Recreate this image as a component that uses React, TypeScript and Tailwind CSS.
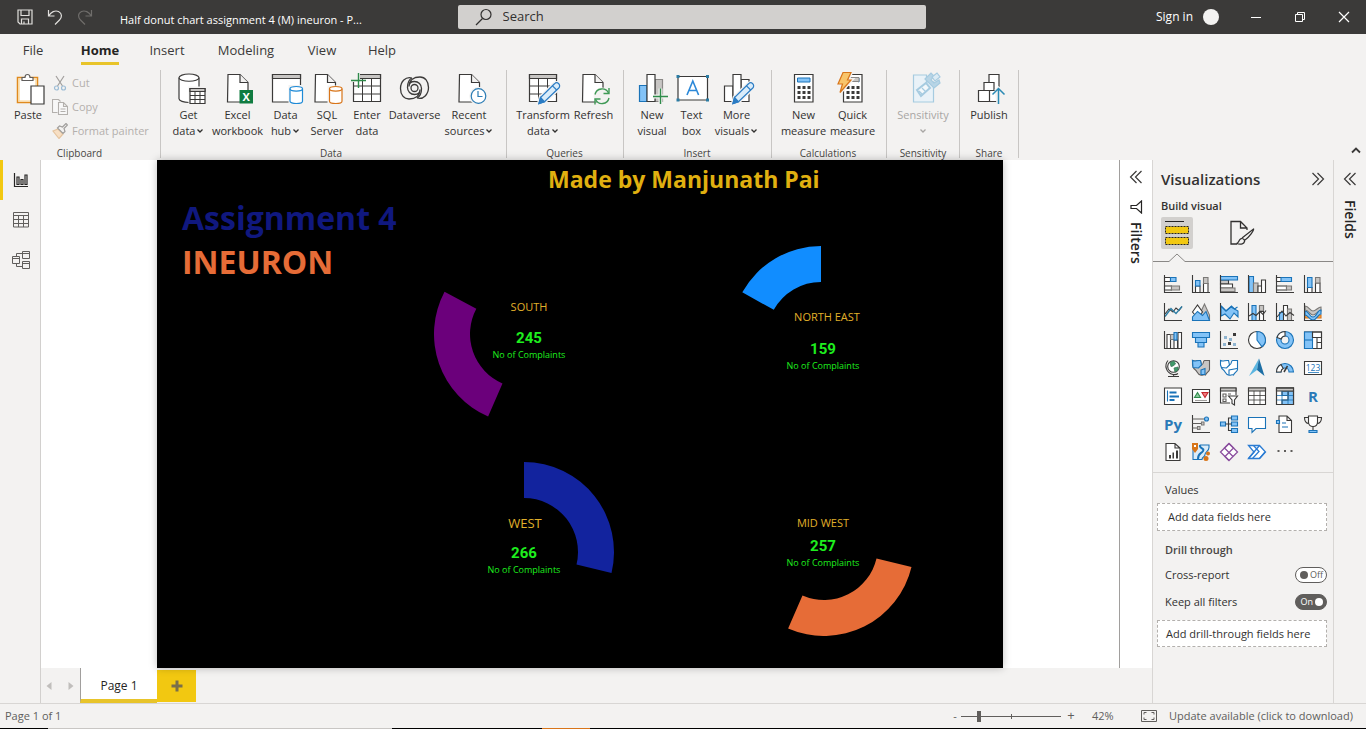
import React from "react";

type Kids = { children?: React.ReactNode };

const K = "#3b3a39";
const BL = "#1a73b8";
const BF = "#83c3f7";
const GR = "#c8c6c4";

function Big({ children }: Kids) {
  return (
    <svg viewBox="0 0 32 32" className="h-8 w-8 shrink-0 overflow-visible" fill="none" stroke={K} strokeWidth="1.2" aria-hidden="true">
      {children}
    </svg>
  );
}

function Doc({ x }: { x: number }) {
  return (
    <g transform={`translate(${x} 1)`}>
      <path d="M.5.5h12l8 8v19.500h-20.500z" fill="#fff" />
      <path d="M12.500.5v8h8" fill="#f3f2f1" />
    </g>
  );
}

function Cylinder({ x, y, w, h, color, fill = "#fff" }: { x: number; y: number; w: number; h: number; color: string; fill?: string }) {
  const r = w / 2;
  const ry = w / 5.5;
  return (
    <g stroke={color} fill={fill}>
      <path d={`M${x} ${y + ry}v${h - 2 * ry}a${r} ${ry} 0 0 0 ${w} 0v${-(h - 2 * ry)}`} />
      <ellipse cx={x + r} cy={y + ry} rx={r} ry={ry} />
    </g>
  );
}

function Grid() {
  return (
    <g>
      <path d="M2.500 1.500h27v27h-27z" fill="#fff" />
      <path d="M2.500 1.500h27v4h-27z" fill={GR} />
      <path d="M2.500 13h27M2.500 21h27M11.500 5.500v23M20.500 5.500v23" strokeWidth="1" />
    </g>
  );
}

function Pencil() {
  return (
    <g stroke="#2b7cc4">
      <path d="M12 30.500l1.500-6L27.500 10.800a3 3 0 0 1 4.300 4.200L17.500 28.800z" fill="#fff" stroke="#f3f2f1" strokeWidth="4" />
      <path d="M12 30.500l1.500-6L27.500 10.800a3 3 0 0 1 4.300 4.200L17.500 28.800z" fill="#d9ecfa" />
      <path d="M12 30.500l1.500-6 4 4.300z" fill="#2b7cc4" />
      <path d="M25.500 12.800l4.200 4.200" />
    </g>
  );
}

function Calc({ x }: { x: number }) {
  return (
    <g transform={`translate(${x} 1.500)`}>
      <path d="M0 0h18.500v27.500h-18.500z" fill="#fff" />
      <path d="M3 3.500h12.500v4h-12.500z" fill={BF} stroke={BL} strokeWidth="1" />
      {[11.5, 16.5, 21.5].map((y) => (
        <path key={y} d={`M3 ${y}h3v3h-3zM8 ${y}h3v3h-3zM13 ${y}h3v3h-3z`} fill={K} stroke="none" />
      ))}
    </g>
  );
}

const PasteIcon = () => (
  <Big>
    <path d="M5.500 4.500h20v25h-20z" fill="#fff" stroke="#e08a1e" strokeWidth="1.500" />
    <path d="M7 6h17v22H7z" stroke="#f9d28f" />
    <path d="M10 7.500V4.500h3c0-2 1-3 2.500-3s2.500 1 2.500 3h3v3z" fill="#fff" stroke="#605e5c" />
    <path d="M19 13h13v18H19z" fill="#fff" />
  </Big>
);
const GetDataIcon = () => (
  <Big>
    <Cylinder x={6} y={1} w={20} h={28.5} color={K} />
    <path d="M15.500 13.500H33V31H15.500z" fill="#f3f2f1" stroke="none" />
    <path d="M17 15.500h15v15H17z" fill="#fff" />
    <path d="M17 15.500h15v3H17z" fill={GR} />
    <path d="M17 22.500h15M17 26.500h15M22 18.500v12M27 18.500v12" strokeWidth="1" />
  </Big>
);
const ExcelIcon = () => (
  <Big>
    <Doc x={5.5} />
    <path d="M17.500 17H31v13.500H17.500z" fill="#107c41" stroke="none" />
    <text x="24.200" y="28" textAnchor="middle" fontSize="11" fontWeight="700" fill="#fff" stroke="none" fontFamily="Open Sans, sans-serif">X</text>
  </Big>
);
const DataHubIcon = () => (
  <Big>
    <path d="M2.500 1.500h28v27.500h-28z" fill="#fff" />
    <path d="M2.500 1.500h28v4h-28z" fill={GR} />
    <path d="M18.500 12H34v19H18.500z" fill="#f3f2f1" stroke="none" />
    <Cylinder x={20} y={13.5} w={12.5} h={17} color="#1e8ad6" />
  </Big>
);
const SqlIcon = () => (
  <Big>
    <Doc x={4} />
    <path d="M16.500 12.500H32V31H16.500z" fill="#f3f2f1" stroke="none" />
    <Cylinder x={18.5} y={13.5} w={12.5} h={17} color="#d8751a" />
  </Big>
);
const EnterIcon = () => (
  <Big>
    <Grid />
    <path d="M0 0h9v9H0z" fill="#f3f2f1" stroke="none" />
    <path d="M7.500 0v15M0 7.500h15" stroke="#2e8b4a" strokeWidth="1.400" />
  </Big>
);
const swirl = "M13 5C6.500 3 1.500 9 1.500 15.500 1.500 22 5 26 10 26c6 0 11-3 11-9.500M13 5C9 7 8.500 11 8.500 14.500c0 4 3 7 7 7s5.500-2 5.500-5";
const DataverseIcon = () => (
  <Big>
    <g strokeWidth="1.300">
      <path d={swirl} />
      <path d={swirl} transform="rotate(180 15.500 15)" />
      <circle cx="15.500" cy="15" r="3.500" />
    </g>
  </Big>
);
const RecentIcon = () => (
  <Big>
    <Doc x={6} />
    <circle cx="25.500" cy="23" r="7.500" fill="#fff" stroke="#f3f2f1" strokeWidth="3.500" />
    <circle cx="25.500" cy="23" r="7.300" fill="#fff" stroke="#2b7cb4" />
    <path d="M25 18v5.500h4.500" stroke="#2b7cb4" />
  </Big>
);
const TransformIcon = () => (
  <Big>
    <Grid />
    <Pencil />
  </Big>
);
const RefreshIcon = () => (
  <Big>
    <Doc x={4.5} />
    <circle cx="24" cy="23" r="8.500" fill="#f3f2f1" stroke="none" />
    <g stroke="#3f9a56" strokeWidth="1.400">
      <path d="M17 21.500a7.200 7.200 0 0 1 13.500-1.500M31 25a7.200 7.200 0 0 1-13.500 1.500" />
      <path d="M31 15v5.500h-5.500M17 31.500V26h5.500" />
    </g>
  </Big>
);
const NewVisualIcon = () => (
  <Big>
    <path d="M3.500 12.500H11v16H3.500z" fill={BF} stroke={BL} />
    <path d="M19 6.500h7.500v22H19z" fill={GR} stroke="#8a8886" />
    <path d="M11 1.500h8v27h-8z" fill="#fff" />
    <path d="M24.500 15.500v15.500M17 23.500h15" stroke="#f3f2f1" strokeWidth="4" />
    <path d="M24.500 15.500v15.500M17 23.500h15" stroke="#2e8b4a" strokeWidth="1.400" />
  </Big>
);
const TextBoxIcon = () => (
  <Big>
    <path d="M2 3.500h29.500V27H2z" fill="#fff" />
    <path d="M.5 2h3v3h-3zM30 2h3v3h-3zM.5 25.500h3v3h-3zM30 25.500h3v3h-3z" fill="#2b7ca4" stroke="none" />
    <path d="M11 22l5.800-14 5.800 14M13 17.500h7.600" stroke="#2b88d8" strokeWidth="1.600" />
  </Big>
);
const MoreIcon = () => (
  <Big>
    <path d="M3.500 13H12v15.500H3.500zM20 6.500h8v22h-8z" fill="#fff" />
    <path d="M12 1.500h8v27h-8z" fill="#fff" />
    <Pencil />
  </Big>
);
const CalcIcon = () => (
  <Big>
    <Calc x={6.500} />
  </Big>
);
const QuickIcon = () => (
  <Big>
    <Calc x={6.500} />
    <path d="M8.500 3.500h13v7h-13z" fill="#fff" stroke="none" />
    <path d="M13 4.500h9v4h-9z" fill={GR} stroke="#8a8886" strokeWidth="1" />
    <path d="M6 -.5h8L10.500 7H14L3 19.500l2.500-8.500H1z" fill="#f8c56b" stroke="#f3f2f1" strokeWidth="4" />
    <path d="M6 -.5h8L10.500 7H14L3 19.500l2.500-8.500H1z" fill="#f8c56b" stroke="#d8751a" />
  </Big>
);
const SensitivityIcon = () => (
  <Big>
    <g stroke="#a6cbe0">
      <path d="M6.500 2h13v7h7v20h-20z" fill="#e9f2f8" />
      <path d="M10 17l9-7 4 5-9 8z" fill="#f3f8fb" strokeWidth="2" />
      <path d="M12 18l4 4M15 15l4 4" />
      <path d="M18 6l6-6 3 3-3 4 3 3 5-3 1 3-6 5z" fill="#b8d5e6" />
      <path d="M25 4l5-4 3 4-5 4z" fill="#dcebf4" />
    </g>
  </Big>
);
const PublishIcon = () => (
  <Big>
    <path d="M16 1.500h10v27H16z" fill="#fff" />
    <path d="M11 9.500h10v8H11z" fill="#fff" />
    <path d="M16.500 17.500h10v11h-10zM5.500 17.500h11v11h-11z" fill="#fff" />
    <path d="M21.500 16.500L25.500 13l7 6v12h-9z" fill="#f3f2f1" stroke="none" />
    <path d="M25.500 31V15.500M19.500 21.500l6-6 6 6" stroke="#2b8ab4" strokeWidth="1.500" />
  </Big>
);

type Tool = { label: string[]; icon: () => React.JSX.Element; w: string; drop?: boolean; off?: boolean };
type Group = { name: string; pad: string; tools: Tool[] };

const groups: Group[] = [
  {
    name: "Data",
    pad: "pl-1 pr-[9px]",
    tools: [
      { label: ["Get", "data"], icon: GetDataIcon, w: "w-[47px]", drop: true },
      { label: ["Excel", "workbook"], icon: ExcelIcon, w: "w-[51px]" },
      { label: ["Data", "hub"], icon: DataHubIcon, w: "w-[45px]", drop: true },
      { label: ["SQL", "Server"], icon: SqlIcon, w: "w-[38px]" },
      { label: ["Enter", "data"], icon: EnterIcon, w: "w-[42px]" },
      { label: ["Dataverse"], icon: DataverseIcon, w: "w-[53px]" },
      { label: ["Recent", "sources"], icon: RecentIcon, w: "w-[56px]", drop: true },
    ],
  },
  {
    name: "Queries",
    pad: "pl-[7px] pr-2",
    tools: [
      { label: ["Transform", "data"], icon: TransformIcon, w: "w-[58px]", drop: true },
      { label: ["Refresh"], icon: RefreshIcon, w: "w-[43px]" },
    ],
  },
  {
    name: "Insert",
    pad: "pl-2 pr-[9px]",
    tools: [
      { label: ["New", "visual"], icon: NewVisualIcon, w: "w-[40px]" },
      { label: ["Text", "box"], icon: TextBoxIcon, w: "w-[39px]" },
      { label: ["More", "visuals"], icon: MoreIcon, w: "w-[51px]", drop: true },
    ],
  },
  {
    name: "Calculations",
    pad: "pl-[7px] pr-[9px]",
    tools: [
      { label: ["New", "measure"], icon: CalcIcon, w: "w-[49px]" },
      { label: ["Quick", "measure"], icon: QuickIcon, w: "w-[49px]" },
    ],
  },
  {
    name: "Sensitivity",
    pad: "px-1",
    tools: [{ label: ["Sensitivity", ""], icon: SensitivityIcon, w: "w-[64px]", drop: true, off: true }],
  },
  { name: "Share", pad: "px-1", tools: [{ label: ["Publish"], icon: PublishIcon, w: "w-[50px]" }] },
];

function Chevron() {
  return (
    <svg viewBox="0 0 8 6" className="h-[6px] w-2 shrink-0" fill="none" stroke="currentColor" strokeWidth="1.300" aria-hidden="true">
      <path d="M1.500 1.500L4 4l2.500-2.500" />
    </svg>
  );
}

function ToolButton({ tool }: { tool: Tool }) {
  const Icon = tool.icon;
  return (
    <button className={`${tool.w} flex flex-col items-center ${tool.off ? "text-[#a8a6a4]" : "text-[#323130]"}`}>
      <span className="mb-[2px]">
        <Icon />
      </span>
      {tool.label.map((line, i) => (
        <span key={i} className="flex h-4 items-center gap-px whitespace-nowrap text-[11px] leading-4">
          {line}
          {tool.drop && i === tool.label.length - 1 && <Chevron />}
        </span>
      ))}
    </button>
  );
}

function GroupBox({ name, pad, children }: { name: string; pad: string } & Kids) {
  return (
    <section aria-label={name} className={`flex flex-col justify-between border-r border-[#c8c6c4] ${pad}`}>
      <div className="flex items-start pt-[3px]">{children}</div>
      <div className="text-center text-[10px] leading-[10px] text-[#484644]">{name}</div>
    </section>
  );
}

function Ribbon() {
  return (
    <div className="flex h-[92px] items-stretch pt-[2px] pb-[2px]">
      <GroupBox name="Clipboard" pad="pl-2 pr-[9px]">
        <button className="flex w-10 flex-col items-center text-[#323130]">
          <span className="mb-[2px]">
            <PasteIcon />
          </span>
          <span className="text-[11px] leading-4">Paste</span>
        </button>
        <div className="-mt-[2px] flex w-[103px] flex-col pl-1 text-[11px] leading-6 text-[#b3b0ad]">
          <button className="flex h-6 items-center gap-1" disabled>
            <svg viewBox="0 0 16 16" className="h-4 w-4 shrink-0" fill="none" strokeWidth="1.200" aria-hidden="true">
              <path d="M4 1l6.500 10M12 1L5.500 11" stroke="#a19f9d" />
              <circle cx="4.500" cy="13" r="2" stroke="#9dbdd6" />
              <circle cx="11.500" cy="13" r="2" stroke="#9dbdd6" />
            </svg>
            Cut
          </button>
          <button className="flex h-6 items-center gap-1" disabled>
            <svg viewBox="0 0 16 16" className="h-4 w-4 shrink-0" fill="#f8f8f8" stroke="#b3b0ad" strokeWidth="1.100" aria-hidden="true">
              <path d="M5.500 13.500H.5V.5h6l2 2" />
              <path d="M6.500 3.500h5l4 4v8h-9zM11.500 3.500v4h4M8.500 10h5M8.500 12.500h5" />
            </svg>
            Copy
          </button>
          <button className="flex h-6 items-center gap-1 whitespace-nowrap" disabled>
            <svg viewBox="0 0 16 16" className="h-4 w-4 shrink-0" fill="none" strokeWidth="1.200" aria-hidden="true">
              <path d="M1 8l5-2 5 5-4 4.500z" fill="#f7dfc4" stroke="#e5c49f" />
              <path d="M5.500 5l2-2 3 1 3.500-3.500 1.500 1.500L12 5.500l1 3-2 2z" stroke="#a19f9d" fill="#f3f2f1" />
            </svg>
            Format painter
          </button>
        </div>
      </GroupBox>
      {groups.map((g) => (
        <GroupBox key={g.name} name={g.name} pad={g.pad}>
          {g.tools.map((t) => (
            <ToolButton key={t.label.join()} tool={t} />
          ))}
        </GroupBox>
      ))}
      <button aria-label="Collapse ribbon" className="mr-1 mb-1 ml-auto self-end">
        <svg viewBox="0 0 12 8" className="h-2 w-3" fill="none" stroke={K} strokeWidth="1.800" aria-hidden="true">
          <path d="M2 6.500l4-4 4 4" />
        </svg>
      </button>
    </div>
  );
}

function TitleBar() {
  return (
    <header className="flex h-[34px] items-center bg-[#3b3a39] text-[12px] text-white">
      <div className="flex min-w-0 flex-1 items-center pl-[17px]">
        <button aria-label="Save">
          <svg viewBox="0 0 16 16" className="h-4 w-4" fill="none" stroke="#e1dfdd" strokeWidth="1.200" aria-hidden="true">
            <path d="M1 1h14v14H3l-2-2zM4 1v5.500h8V1M4.500 15v-5h7v5M7 15v-2.500" />
          </svg>
        </button>
        <button aria-label="Undo" className="ml-[14px]">
          <svg viewBox="0 0 16 16" className="h-4 w-4" fill="none" stroke="#e1dfdd" strokeWidth="1.200" aria-hidden="true">
            <path d="M1.500 1v6h6M2 6.500C4 3 8 1 11.500 2.500c4 2 3.500 6 1 8.500l-4.500 4.500" />
          </svg>
        </button>
        <button aria-label="Redo" className="ml-[14px]" disabled>
          <svg viewBox="0 0 16 16" className="h-4 w-4" fill="none" stroke="#6f6d6b" strokeWidth="1.200" aria-hidden="true">
            <path d="M14.500 1v6h-6M14 6.500C12 3 8 1 4.500 2.500c-4 2-3.500 6-1 8.500L8 15.500" />
          </svg>
        </button>
        <h1 className="mt-[6px] ml-[27px] truncate text-[11px] leading-4">Half donut chart assignment 4 (M) ineuron - P...</h1>
      </div>
      <label className="flex h-6 w-[468px] items-center rounded-[2px] bg-[#d2d0ce] pl-[17px]">
        <svg viewBox="0 0 18 18" className="h-[18px] w-[18px]" fill="none" stroke="#323130" strokeWidth="1.200" aria-hidden="true">
          <circle cx="11" cy="6.500" r="5" />
          <path d="M7.500 10.500L1 17" />
        </svg>
        <input aria-label="Search" placeholder="Search" className="ml-[10px] min-w-0 flex-1 bg-transparent text-[13px] text-[#323130] outline-none placeholder:text-[#323130]" />
      </label>
      <div className="flex flex-1 items-center justify-end">
        <button className="flex items-center gap-[10px]">
          Sign in
          <span className="h-4 w-4 rounded-full bg-[#f3f2f1]" />
        </button>
        <button aria-label="Minimize" className="ml-[15px] flex w-11 justify-center">
          <svg viewBox="0 0 12 12" className="h-3 w-3" stroke="#fff" aria-hidden="true"><path d="M1 6.500h10" /></svg>
        </button>
        <button aria-label="Restore" className="flex w-11 justify-center">
          <svg viewBox="0 0 12 12" className="h-3 w-3" fill="none" stroke="#fff" aria-hidden="true"><path d="M1.500 3.500h7v7h-7zM3.500 3V1.500h7v7H9" /></svg>
        </button>
        <button aria-label="Close" className="flex w-11 justify-center">
          <svg viewBox="0 0 12 12" className="h-3 w-3" fill="none" stroke="#fff" strokeWidth="1.200" aria-hidden="true"><path d="M1 1l10 10M11 1L1 11" /></svg>
        </button>
      </div>
    </header>
  );
}

const menu = [
  { name: "File", w: "w-[66px]" },
  { name: "Home", w: "w-[68px]" },
  { name: "Insert", w: "w-[66px]" },
  { name: "Modeling", w: "w-[92px]" },
  { name: "View", w: "w-[60px]" },
  { name: "Help", w: "w-[60px]" },
];

function Menu() {
  return (
    <nav className="flex h-[34px] items-start pt-[6px] text-[13px] leading-5 text-[#3b3a39]">
      {menu.map((m) => (
        <button key={m.name} className={`${m.w} flex justify-center`}>
          <span className={m.name === "Home" ? "border-b-[3px] border-[#e8c42a] pb-[2px] font-bold text-[#252423]" : ""}>{m.name}</span>
        </button>
      ))}
    </nav>
  );
}

function Rail() {
  return (
    <nav aria-label="Views" className="flex w-[41px] shrink-0 flex-col border-r border-[#d2d0ce]">
      <button aria-label="Report view" className="flex h-10 items-center border-l-[3px] border-[#f2c811] pl-[10px]">
        <svg viewBox="0 0 16 16" className="h-4 w-4" fill="none" stroke="#252423" strokeWidth="1.200" aria-hidden="true">
          <path d="M1.500 1v13.500H15M4 5h2v7.500H4zM8 7.500h2v5H8zM12 3h2v9.500h-2z" />
        </svg>
      </button>
      <button aria-label="Data view" className="flex h-10 items-center pl-[13px]">
        <svg viewBox="0 0 16 16" className="h-4 w-4" fill="none" stroke="#605e5c" aria-hidden="true">
          <path d="M.5.5h15v14.500H.5zM.5 3.500h15M.5 7.500h15M.5 11.500h15M5.500 3.500V15M10.500 3.500V15" />
        </svg>
      </button>
      <button aria-label="Model view" className="flex h-10 items-center pl-3">
        <svg viewBox="0 0 18 18" className="h-[18px] w-[18px]" fill="none" stroke="#605e5c" aria-hidden="true">
          <path d="M.5 5.500h7v7h-7zM.5 7.500h7M10.500 .5h7v7h-7zM10.500 2.500h7M10.500 10.500h7v7h-7zM10.500 12.500h7M4.500 5.500v-3h6M4.500 12.500v3h6" />
        </svg>
      </button>
    </nav>
  );
}

type Slice = { name: string; color: string; from: number; to: number; pos: string };

const slices: Slice[] = [
  { name: "South", color: "#6b007b", from: 203.5, to: 298, pos: "left-[277px] top-[84px]" },
  { name: "North East", color: "#118dff", from: 299, to: 360, pos: "left-[574px] top-[86px]" },
  { name: "West", color: "#12239e", from: 0, to: 103.5, pos: "left-[277px] top-[302px]" },
  { name: "Mid West", color: "#e66c37", from: 103.5, to: 203.5, pos: "left-[577px] top-[296px]" },
];

function arc(from: number, to: number) {
  const pt = (r: number, a: number) => {
    const t = (a * Math.PI) / 180;
    return `${(90 + r * Math.sin(t)).toFixed(2)} ${(90 - r * Math.cos(t)).toFixed(2)}`;
  };
  return `M${pt(90, from)}A90 90 0 0 1 ${pt(90, to)}L${pt(54, to)}A54 54 0 0 0 ${pt(54, from)}Z`;
}

const cards = [
  { title: "SOUTH", value: 245, size: "text-[11px]", tpos: "left-[312px] top-[139px]", cpos: "left-[312px] top-[170px]" },
  { title: "NORTH EAST", value: 159, size: "text-[11px]", tpos: "left-[610px] top-[149px]", cpos: "left-[606px] top-[181px]" },
  { title: "WEST", value: 266, size: "text-[13px]", tpos: "left-[308px] top-[355px]", cpos: "left-[307px] top-[385px]" },
  { title: "MID WEST", value: 257, size: "text-[11px]", tpos: "left-[606px] top-[355px]", cpos: "left-[606px] top-[378px]" },
];

function Report() {
  return (
    <main className="flex min-w-0 flex-1 bg-white px-[116px]">
      <div className="relative min-h-[508px] flex-1 overflow-hidden bg-black shadow-[0_0_8px_rgba(0,0,0,0.25)]">
        {slices.map((s) => (
          <svg key={s.name} viewBox="0 0 180 180" className={`absolute h-[180px] w-[180px] ${s.pos}`} role="img" aria-label={s.name}>
            <path d={arc(s.from, s.to)} fill={s.color} />
          </svg>
        ))}
        <h2 className="absolute top-[3px] left-[391px] text-[23px] leading-8 font-bold whitespace-nowrap text-[#e0b010]">Made by Manjunath Pai</h2>
        <div className="absolute top-[36px] left-[25px] text-[32px] leading-[44px] font-bold whitespace-nowrap">
          <p className="text-[#10187f]">Assignment 4</p>
          <p className="text-[#e66c37]">INEURON</p>
        </div>
        {cards.map((c) => (
          <React.Fragment key={c.title}>
            <h3 className={`absolute w-[120px] text-center leading-4 text-[#e0b02a] ${c.size} ${c.tpos}`}>{c.title}</h3>
            <div className={`absolute w-[120px] text-center text-[#1eee1e] ${c.cpos}`}>
              <p className="font-['Roboto',sans-serif] text-[15px] leading-4 font-bold">{c.value}</p>
              <p className="text-[9px] leading-[18px]">No of Complaints</p>
            </div>
          </React.Fragment>
        ))}
      </div>
    </main>
  );
}

function PageTabs() {
  return (
    <div className="flex h-[35px] shrink-0 items-stretch bg-[#f3f2f1]">
      <div className="flex w-[39px] items-center justify-between pr-[6px] pl-[5px]">
        <button aria-label="Previous page">
          <svg viewBox="0 0 6 8" className="h-2 w-[6px]" fill="#c0bebc" aria-hidden="true"><path d="M5.500 0v8L.5 4z" /></svg>
        </button>
        <button aria-label="Next page">
          <svg viewBox="0 0 6 8" className="h-2 w-[6px]" fill="#c0bebc" aria-hidden="true"><path d="M.5 0v8l5-4z" /></svg>
        </button>
      </div>
      <button className="w-[77px] border-b-4 border-l border-b-[#e8c42a] border-l-[#a19f9d] bg-white pt-[4px] text-[12px] text-[#252423]">Page 1</button>
      <button aria-label="New page" className="mt-[2px] mb-px flex w-[39px] items-center justify-center bg-[#f2c811]">
        <svg viewBox="0 0 12 12" className="h-3 w-3" stroke="#7a6f4a" strokeWidth="3" aria-hidden="true"><path d="M6 .5v11M.5 6h11" /></svg>
      </button>
    </div>
  );
}

function DoubleChevron({ right = false }: { right?: boolean }) {
  return (
    <svg viewBox="0 0 14 14" className="h-[14px] w-[14px]" fill="none" stroke="#3b3a39" strokeWidth="1.200" aria-hidden="true">
      <path d={right ? "M1.500 1l6 6-6 6M6.500 1l6 6-6 6" : "M7.500 1l-6 6 6 6M12.500 1l-6 6 6 6"} />
    </svg>
  );
}

function V({ children }: Kids) {
  return (
    <svg viewBox="0 0 18 18" className="h-[18px] w-[18px] overflow-visible" fill="none" stroke={K} strokeWidth="1.100" aria-hidden="true">
      {children}
    </svg>
  );
}

const Axis = () => <path d="M.5 0v17.500H18" />;
const MapShape = "M.5 1.500c3 1.500 4-.5 8 0l1 4.500c3-1 1-4 3-4.500h5v9c0 2-3 3-4 5.500-2-1-3 1-5 0-3-.5-3-3.500-5-5-2-1-2.500-3-3-5z";

const visuals: [string, React.ReactNode][] = [
  ["Stacked bar chart", <V><path d="M.5 2.500h6v4h-6zM.5 11h7v4h-7z" fill="#fff" /><path d="M6.500 2.500h5.500v4H6.500z" fill={BF} stroke={BL} /><path d="M7.500 11h8v4h-8z" fill={GR} stroke="#7a7876" /><Axis /></V>],
  ["Stacked column chart", <V><path d="M3.500 11H8v6.500H3.500zM11.500 8.500H16v9h-4.500z" fill="#fff" /><path d="M3.500 5.500H8V11H3.500z" fill={BF} stroke={BL} /><path d="M11.500 2.500H16v6h-4.500z" fill={GR} stroke="#7a7876" /><Axis /></V>],
  ["Clustered bar chart", <V><path d="M.5 5h8v4h-8z" fill={GR} /><path d="M.5 9h12v4H.5z" fill="#fff" /><path d="M.5 13H15v3.500H.5z" fill={GR} stroke="#7a7876" /><path d="M.5 1.500h17V5H.5z" fill={BF} stroke={BL} /><Axis /></V>],
  ["Clustered column chart", <V><path d="M1 1.500h4.500v16H1z" fill={BF} stroke={BL} /><path d="M5.500 8H10v9.500H5.500z" fill={GR} stroke="#7a7876" /><path d="M10 11h3.500v6.500H10zM13.500 5h4v12.500h-4z" fill="#fff" /><Axis /></V>],
  ["100% stacked bar chart", <V><path d="M.5 2.500h5v4h-5zM.5 11h10v4H.5z" fill="#fff" /><path d="M5 2.500h10.500v4H5z" fill={BF} stroke={BL} /><path d="M10.500 11h5v4h-5z" fill={GR} stroke="#7a7876" /><Axis /></V>],
  ["100% stacked column chart", <V><path d="M3.500 12.500H8v5H3.500zM11.500 8H16v9.500h-4.500z" fill="#fff" /><path d="M3.500 2.500H8v10H3.500z" fill={BF} stroke={BL} /><path d="M11.500 2.500H16V8h-4.500z" fill={GR} stroke="#7a7876" /><Axis /></V>],
  ["Line chart", <V><path d="M1 11l4-5 4 3 3-4 3 2.500 3-4" /><path d="M1 13.500l6-8 5 5 6-7" stroke="#2b7ca4" strokeWidth="1.300" /><Axis /></V>],
  ["Area chart", <V><path d="M5 17L12.500 1l5 11v5.500z" fill={GR} stroke="#7a7876" /><path d="M.5 9l5-7 5 7-5 6z" fill="#fff" /><path d="M.5 17.500V14l5-5.500 5 4 3.500-4 3.500 9z" fill={BF} stroke={BL} /></V>],
  ["Stacked area chart", <V><path d="M1 3l5 5 5-4 7 4v6l-4-4-4 6-5-5-4 2z" fill={BF} stroke={BL} /><path d="M1 3l5 5 5.500-5 3 3 3-2" stroke={BL} /><Axis /></V>],
  ["Line and stacked column chart", <V><path d="M4 2.500h4v15H4zM11.500 2.500h4v7h-4z" fill={BF} stroke={BL} /><path d="M11.500 2.500h4V8h-4z" fill={GR} stroke="#7a7876" /><path d="M11.500 8.500h4v9h-4z" fill="#fff" /><path d="M1 13l4-2.500 3 2 4-4 3 3 3-4" /><Axis /></V>],
  ["Line and clustered column chart", <V><path d="M3.500 9.500h4v8h-4z" fill={BF} stroke={BL} /><path d="M7.500 2.500h4v15h-4z" fill="#fff" /><path d="M11.500 6h4v11.500h-4z" fill={GR} stroke="#7a7876" /><path d="M1 14l5-6 4 5 4-3.500 4 3" /><Axis /></V>],
  ["Ribbon chart", <V><path d="M1 3c4 0 5 5 8 5s5-4 8-4v4c-4 0-5 4-8 4s-4-5-8-5z" fill={GR} stroke="#7a7876" /><path d="M1 11h4v4H1zM13 12h4v3h-4z" fill="#f0a04b" stroke="#d8751a" /><path d="M1 8c4 0 4 6 8 6s4-7 8-7v4c-3 0-4 6-8 6s-5-5-8-5z" fill={BF} stroke={BL} /><Axis /></V>],
  ["Waterfall chart", <V><path d="M3 3.500h3.500v14H3zM10 9h3.500v8.500H10zM14 1.500h3.500v16H14z" fill="#fff" /><path d="M6.500 3.500h4v5h-4z" fill={GR} stroke="#7a7876" /><path d="M10 1.500h3V9h-3z" fill={BF} stroke={BL} /><Axis /></V>],
  ["Funnel chart", <V><g fill={BF} stroke={BL}><path d="M.5 1.500h17v5H.5zM3.500 6.500h11v5h-11zM6 11.500h6v4.500H6z" /></g></V>],
  ["Scatter chart", <V><g stroke="none"><path d="M13 2h3v3h-3zM8 11h3v3H8z" fill="#3b3a39" /><path d="M4 5h3v3H4zM9 7h3v3H9zM3 12h3v3H3zM13 12h3v3h-3z" fill="#8fb4d0" /></g><Axis /></V>],
  ["Pie chart", <V><circle cx="9" cy="9" r="8.500" fill="#fff" /><path d="M9 .5a8.500 8.500 0 0 1 5 15.300L9 9z" fill={BF} stroke={BL} /></V>],
  ["Donut chart", <V><path fillRule="evenodd" d="M9 .5a8.500 8.500 0 1 1 0 17a8.500 8.500 0 1 1 0-17M9 5a4 4 0 1 0 0 8a4 4 0 1 0 0-8" fill={BF} stroke={BL} /><path d="M9 .5V5a4 4 0 0 0-3.800 3L1 6.500A8.500 8.500 0 0 1 9 .5z" fill="#fff" /></V>],
  ["Treemap", <V><path d="M.5 1h17v16.500H.5z" fill="#fff" /><path d="M.5 1h8v16.500h-8z" fill={BF} stroke={BL} /><path d="M.5 9h8" stroke={BL} /><path d="M8.500 1h9v5.500h-9zM8.500 6.500h4.500v11M13 11.500h4.500" /></V>],
  ["Map", <V><circle cx="9.500" cy="7.500" r="5.800" fill="#fff" /><path d="M6 3.500l4-1.500 1.500 3-2.500 2-2 .5zM10 9l4-1v3l-3 2z" fill="#3f9a6a" stroke="#3f7a5a" strokeWidth=".8" /><path d="M4 1.500C0 6 2 14 9 15.500c2 .3 4-.2 5-1M9.500 15.500v2M4 17.500h11" /></V>],
  ["Filled map", <V><path d={MapShape} fill={GR} stroke="#605e5c" /><path d="M.5 1.500c3 1.500 4-.5 8 0l1 4.500-3 3-5.500-.5zM9 11l4-1.500v6H9z" fill={BF} stroke={BL} /></V>],
  ["Shape map", <V><path d={MapShape} fill="#fff" stroke={BL} /><path d="M1 8.500l5.500.5L9.500 6M9 16v-5l8-1.500" stroke={BL} /></V>],
  ["Azure map", <V><path d="M11 -.5L1 17l8-6z" fill="#5bb5e0" stroke="none" /><path d="M11 -.5L16.500 17 9 11z" fill="#1c6ea4" stroke="none" /></V>],
  ["Gauge", <V><path d="M.5 13a8.500 8.500 0 0 1 17 0h-4.500a4 4 0 0 0-8 0z" fill={BF} stroke={BL} /><path d="M.5 13A8.500 8.500 0 0 1 5 5.500l2.200 4A4 4 0 0 0 5 13z" fill="#fff" /><path d="M8 13l3.500-6" strokeWidth="1.500" /></V>],
  ["Card", <V><path d="M.5 2.500h17v13H.5z" fill="#fff" /><text x="9" y="12" textAnchor="middle" fontSize="8.500" fill={BL} stroke="none" fontFamily="Open Sans, sans-serif">123</text><path d="M4 13.500h11" stroke={BL} strokeWidth=".8" /></V>],
  ["Multi-row card", <V><path d="M.5 1h17v16.500H.5z" fill="#fff" /><path d="M3.500 3.500v11" stroke={BL} /><path d="M5.500 5.500h7M5.500 9.500H15M5.500 13h5" stroke={BL} strokeWidth="1.800" /></V>],
  ["KPI", <V><path d="M.5 2.500h17v13H.5z" fill="#fff" /><path d="M2.500 10.500l3-5 3 5z" fill="#8cc79c" stroke="#2e8b4a" /><path d="M10 5.500h6l-3 5z" fill="#ef7d7d" stroke="#c4262e" /><path d="M3 13.500h12" stroke="#a19f9d" /></V>],
  ["Slicer", <V><path d="M16 8V1H.5v15H10" fill="#fff" /><path d="M.5 1H16v3H.5z" fill={GR} /><path d="M3 7h3v3H3zM3 12h3v2.500H3zM8 7h3" stroke="#605e5c" /><path d="M8.500 9h9L14.500 13v5l-2.500-1.500V13z" fill="#fff" /></V>],
  ["Table", <V><path d="M.5 1h17v16.500H.5z" fill="#fff" /><path d="M.5 1h17v3H.5z" fill={GR} /><path d="M.5 8.500h17M.5 13h17M6 4v13.500M12 4v13.500" strokeWidth=".8" /></V>],
  ["Matrix", <V><path d="M.5 1h17v16.500H.5z" fill="#fff" /><path d="M12 4h5.500v13.500H6V13h6z" fill={BF} /><path d="M6 4h6v4.500H6z" fill={BF} /><path d="M.5 1h17v3H.5z" fill={GR} /><path d="M.5 8.500h17M.5 13h17M6 4v13.500M12 4v13.500" stroke={BL} strokeWidth=".8" /><path d="M.5 1h17v16.500H.5z" /></V>],
  ["R script visual", <span className="text-[15px] leading-[18px] font-bold text-[#2a7ab8]">R</span>],
  ["Python visual", <span className="text-[15px] leading-[18px] font-bold text-[#2a7ab8]">Py</span>],
  ["Key influencers", <V><Axis /><path d="M.5 4h12M.5 8.500h9M.5 13H6" stroke="#605e5c" /><circle cx="14.500" cy="4" r="2" fill={BF} stroke={BL} /><path d="M9.500 7h2.500v3H9.500zM5.500 11.500H8v3H5.500z" fill={GR} stroke="#7a7876" /></V>],
  ["Decomposition tree", <V><g fill={BF} stroke={BL}><path d="M.5 7h5v4h-5zM11.500 1h6v4h-6zM11.500 7h6v4h-6zM11.500 13.500h6v4h-6z" /></g><path d="M5.500 9h6M11.500 3h-3v12.500h3" /></V>],
  ["Q&A", <V><path d="M.5 2.500h17v11H8l-4 4v-4H.5z" fill="#fff" stroke={BL} /></V>],
  ["Smart narrative", <V><path d="M3 5V1h8l4.500 4.500v12H3V9M11 1v4.500h4.500" fill="#fff" /><path d="M.5 5.500h3v3h-3z" fill={BF} stroke={BL} /><path d="M6 8h4M6 12h6" stroke={BL} /></V>],
  ["Goals", <V><path d="M4.500 1h9v6c0 3-2 4.500-4.500 4.500S4.500 10 4.500 7z" fill="#fff" /><path d="M4.500 2.500h-4c0 4 1 6 4.500 6M13.500 2.500h4c0 4-1 6-4.500 6M9 11.500v4" /><path d="M5 15.500h8v2H5z" fill={BF} stroke={BL} /></V>],
  ["Paginated report", <V><path d="M2 .5h9L16 5v12.500H2zM11 .5V5h5" fill="#fff" /><path d="M5 12h2v3.500H5zM8.500 9.500h1.500v6H8.500zM12 7.500h2v8h-2z" fill={K} stroke="none" /></V>],
  ["ArcGIS map", <V><path d="M1 6v10.500h9c0-3 3-2 3-5s4-3 4-7V2H8" fill="#dcecf8" stroke={BL} /><path d="M8 2c-1 4 5 3 3 6s-5 2-5 8" stroke={BL} strokeWidth="2" /><path d="M0 0h6v6l-3 4-3-4z" fill="#d8751a" stroke="none" /><path d="M2 2h2v2H2z" fill="#fff" stroke="none" /><circle cx="16" cy="10.500" r="2" fill="#d8751a" stroke="none" /><circle cx="14" cy="15.500" r="2.500" fill="#d8751a" stroke="none" /></V>],
  ["Power Apps", <V><g stroke="#8b4f9f" strokeWidth="1.300"><path d="M9 .5L17.500 9 9 17.500.5 9z" fill="#fff" /><path d="M9 .5L4.500 5 13 13.500M9 .5L13.500 5 5 13.500 9 17.500M4.500 5L9 9.500" /></g></V>],
  ["Power Automate", <V><g stroke="#2b7cd3" strokeWidth="1.300"><path d="M.5 2.500H11.500L17.500 9l-6 6.500H.5L6 9z" fill="#fff" /><path d="M5.500 2.500L11 8.500 4.500 15.500M11.500 15.500L17 9M.5 15.500l11-13" /></g></V>],
  ["More visuals", <V><path d="M1.500 8h2M8 8h2M14.500 8h2" stroke="#605e5c" strokeWidth="1.800" /></V>],
];

function Toggle({ label, on }: { label: string; on: boolean }) {
  const [checked, setChecked] = React.useState(on);
  return (
    <label className="relative flex h-[27px] items-center justify-between pr-[6px] pl-3">
      <span>{label}</span>
      <input type="checkbox" role="switch" className="sr-only" checked={checked} onChange={(e) => setChecked(e.target.checked)} />
      <span
        aria-hidden="true"
        className={`flex h-4 w-8 items-center gap-[2px] rounded-full border border-[#605e5c] text-[9px] leading-3 ${
          checked ? "flex-row-reverse justify-start bg-[#605e5c] pr-[3px] text-white" : "justify-start bg-white pl-1 text-[#605e5c]"
        }`}
      >
        <span className={`h-2 w-2 shrink-0 rounded-full ${checked ? "bg-white" : "bg-[#605e5c]"}`} />
        {checked ? "On" : "Off"}
      </span>
    </label>
  );
}

function Visualizations() {
  return (
    <aside className="flex w-[182px] shrink-0 flex-col border-x border-[#d8d6d4] text-[11px] leading-4 text-[#323130]">
      <div className="flex h-[38px] items-center justify-between pr-2 pl-2">
        <h2 className="text-[15px] leading-5 font-semibold">Visualizations</h2>
        <button aria-label="Collapse visualizations"><DoubleChevron right /></button>
      </div>
      <h3 className="pl-2 font-semibold">Build visual</h3>
      <div className="mt-[3px] flex gap-9 pl-2">
        <button aria-label="Build visual" className="flex h-8 w-8 items-center justify-center rounded-[2px] bg-[#d2d0ce]">
          <svg viewBox="0 0 26 26" className="h-[26px] w-[26px]" fill="#f2c811" stroke="#252423" aria-hidden="true">
            <path d="M1 1.500h19" />
            <path d="M1.500 6.500h23v7h-23zM1.500 17.500h23v7h-23z" strokeDasharray="2 1" />
          </svg>
        </button>
        <button aria-label="Format visual" className="flex h-8 w-8 items-center">
          <svg viewBox="0 0 26 26" className="h-[26px] w-[26px]" fill="none" stroke="#323130" strokeWidth="1.300" aria-hidden="true">
            <path d="M8 24H2V1.500h9.500L18 8v2M11.500 1.500V8H18" />
            <path d="M7.500 23.500c2 0 2-3 4-4.500s4.500.5 4 2.500-3 3.500-8 2zM13 18L24.500 9c1 1-4.500 8.500-8.500 11" fill="#f3f2f1" />
          </svg>
        </button>
      </div>
      <svg viewBox="0 0 180 9" preserveAspectRatio="xMinYMin slice" className="mt-1 h-[9px] w-full" fill="none" stroke="#8a8886" aria-hidden="true">
        <path d="M0 8.500h16L24 1l8 7.500h148" />
      </svg>
      <div className="grid grid-cols-[repeat(6,28px)] border-b border-[#d8d6d4] pt-2 pb-[6px] pl-[6px]">
        {visuals.map(([name, icon]) => (
          <button key={name} aria-label={name} className="flex h-7 w-7 items-center justify-center">
            {icon}
          </button>
        ))}
      </div>
      <h4 className="pt-[9px] pb-[5px] pl-3">Values</h4>
      <div className="mr-[6px] ml-1 flex h-7 items-center border border-dashed border-[#b3b0ad] bg-white pl-[10px]">Add data fields here</div>
      <h3 className="mt-[11px] mb-[3px] pl-3 font-semibold text-[#484644]">Drill through</h3>
      <Toggle label="Cross-report" on={false} />
      <Toggle label="Keep all filters" on />
      <div className="mt-[5px] mr-[6px] ml-1 flex h-[27px] items-center border border-dashed border-[#b3b0ad] bg-white pl-2 whitespace-nowrap">Add drill-through fields here</div>
    </aside>
  );
}

function StatusBar() {
  return (
    <footer className="flex h-[25px] items-center border-t border-[#d8d6d4] pr-[5px] pl-[5px] text-[11px] text-[#605e5c]">
      <span>Page 1 of 1</span>
      <button aria-label="Zoom out" className="ml-auto w-2">-</button>
      <input
        type="range"
        aria-label="Zoom"
        defaultValue={17}
        className="mx-[2px] h-3 w-[100px] appearance-none bg-[linear-gradient(#605e5c,#605e5c),linear-gradient(#605e5c,#605e5c)] bg-[length:100%_1px,1px_5px] bg-center bg-no-repeat [&::-webkit-slider-thumb]:h-[11px] [&::-webkit-slider-thumb]:w-1 [&::-webkit-slider-thumb]:appearance-none [&::-webkit-slider-thumb]:bg-[#605e5c]"
      />
      <button aria-label="Zoom in" className="ml-[2px] w-3 text-[13px]">+</button>
      <span className="ml-[15px] w-[49px]">42%</span>
      <button aria-label="Fit to page">
        <svg viewBox="0 0 16 12" className="h-3 w-4" fill="none" stroke="#605e5c" aria-hidden="true">
          <path d="M.5.500h15v11H.5zM3 4.500v-2h2.500M10.500 2.500H13v2M13 7.500v2h-2.500M5.500 9.500H3v-2" />
        </svg>
      </button>
      <button className="ml-3 w-[192px] text-left whitespace-nowrap">Update available (click to download)</button>
    </footer>
  );
}

export default function App() {
  return (
    <div className="flex min-h-screen flex-col bg-[#f3f2f1] font-['Open_Sans','Noto_Sans',sans-serif]">
      <TitleBar />
      <Menu />
      <Ribbon />
      <div className="flex flex-1 items-stretch">
        <Rail />
        <div className="flex min-w-0 flex-1 flex-col">
          <div className="flex flex-1 items-stretch">
            <Report />
            <aside className="flex w-[33px] shrink-0 flex-col items-center border-l border-[#a19f9d] bg-white pt-[10px] text-[#252423]">
              <button aria-label="Expand filters"><DoubleChevron /></button>
              <svg viewBox="0 0 14 14" className="mt-4 h-[14px] w-[14px] shrink-0" fill="none" stroke="#252423" strokeWidth="1.200" aria-hidden="true">
                <path d="M12.500 1v12L7.500 8.500H2v-3h5.500z" />
              </svg>
              <h2 className="mt-2 text-[14px] leading-5 font-semibold [writing-mode:vertical-rl]">Filters</h2>
            </aside>
          </div>
          <PageTabs />
        </div>
        <Visualizations />
        <aside className="flex w-8 shrink-0 flex-col items-center pt-3 text-[#252423]">
          <button aria-label="Expand fields"><DoubleChevron /></button>
          <h2 className="mt-[14px] text-[14px] leading-5 font-semibold [writing-mode:vertical-rl]">Fields</h2>
        </aside>
      </div>
      <StatusBar />
      <div className="flex h-px bg-black" aria-hidden="true">
        <div className="w-12" />
        <div className="w-[344px] bg-[#c8c6c4]" />
        <div className="w-[150px]" />
        <div className="w-12 bg-[#d8751a]" />
      </div>
    </div>
  );
}
